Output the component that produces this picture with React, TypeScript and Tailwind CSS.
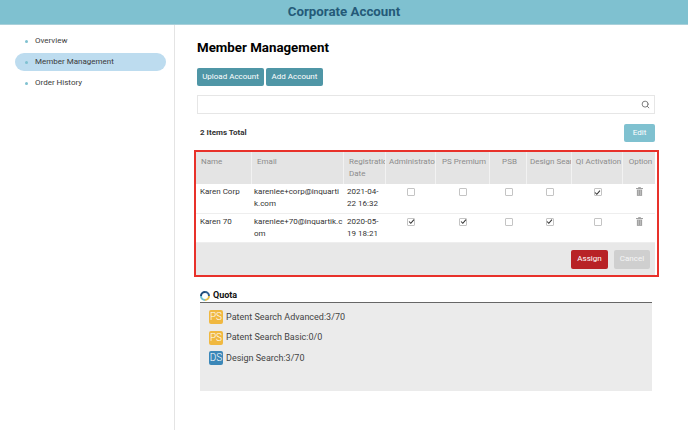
import { Search } from "lucide-react";

const navItems = ["Overview", "Member Management", "Order History"];
const columns = "grid-cols-[56px_92px_42px_50px_54px_37px_45px_51px_32px]";
const headers = ["Name", "Email", "Registration Date", "Administrator", "PS Premium", "PSB", "Design Search", "QI Activation", "Option"];

const members = [
  { name: "Karen Corp", email: "karenlee+corp@inquartik.com", date: "2021-04-22 16:32", checks: [false, false, false, false, true] },
  { name: "Karen 70", email: "karenlee+70@inquartik.com", date: "2020-05-19 18:21", checks: [true, true, false, true, false] },
];

const quotas = [
  { label: "PS", color: "bg-[#f0b840]", text: "Patent Search Advanced:3/70" },
  { label: "PS", color: "bg-[#f0b840]", text: "Patent Search Basic:0/0" },
  { label: "DS", color: "bg-[#3b87b8]", text: "Design Search:3/70" },
];

function Checkbox({ checked }: { checked: boolean }) {
  return (
    <span className="flex h-[8px] w-[8px] items-center justify-center rounded-[1px] border border-[#c4c4c4] bg-white">
      {checked && (
        <svg viewBox="0 0 8 8" className="h-[7px] w-[7px] shrink-0" fill="none" stroke="#333" strokeWidth="1.2">
          <path d="M1.2 4 L3.2 6 L6.8 1.8" />
        </svg>
      )}
    </span>
  );
}

function TrashIcon() {
  return (
    <svg viewBox="0 0 8 10" className="h-[9px] w-[7px]" fill="#a0a0a0">
      <rect x="2.5" y="0" width="3" height="1" />
      <rect x="0" y="1" width="8" height="1.2" />
      <path d="M1 2.8 H7 V10 H1 Z" />
      <path d="M2.8 3.5 V9 M5.2 3.5 V9" stroke="#d8d8d8" strokeWidth="0.6" />
    </svg>
  );
}

function QuotaRing() {
  return (
    <svg viewBox="0 0 10 10" className="h-[10px] w-[10px]" fill="none" strokeWidth="2">
      <path d="M5 1 A4 4 0 0 1 9 5" stroke="#2f5f8f" />
      <path d="M9 5 A4 4 0 0 1 5 9" stroke="#e6c04a" />
      <path d="M5 9 A4 4 0 0 1 1 5" stroke="#6fc0cf" />
      <path d="M1 5 A4 4 0 0 1 5 1" stroke="#1f4a78" />
    </svg>
  );
}

export default function App() {
  return (
    <div className="flex h-[430px] w-[688px] flex-col overflow-hidden bg-white font-['Roboto',sans-serif] text-[#333]">
      {/* Header */}
      <div className="flex h-[25px] shrink-0 items-center justify-center border-b border-[#a9d0da] bg-[#7fc1d0] text-[13.3px] font-bold text-[#245a78]">
        Corporate Account
      </div>

      <div className="flex flex-1">
        {/* Sidebar */}
        <div className="w-[175px] shrink-0 border-r border-[#e4e4e4] pl-[15px] pt-[7px]">
          {navItems.map((item) => (
            <div
              key={item}
              className={`mb-[3px] flex h-[18px] w-[151px] items-center gap-[7px] rounded-full pl-[10px] text-[8px] text-[#3a3a3a] ${
                item === "Member Management" ? "bg-[#bddcef]" : ""
              }`}
            >
              <span className="h-[3px] w-[3px] rounded-full bg-[#7fc1d0]" />
              {item}
            </div>
          ))}
        </div>

        {/* Main */}
        <div className="flex-1 pl-[22px] pt-[13px]">
          <h1 className="text-[13.3px] leading-[20px] font-bold text-black">Member Management</h1>

          <div className="mt-[10px] flex gap-[2px]">
            <button className="h-[18px] w-[67px] rounded-[2px] bg-[#4f96a6] text-[8px] text-white">Upload Account</button>
            <button className="h-[18px] w-[57px] rounded-[2px] bg-[#4f96a6] text-[8px] text-white">Add Account</button>
          </div>

          <div className="mt-[9px] flex h-[19px] w-[458px] items-center justify-end border border-[#e6e6e6] pr-[4px]">
            <Search className="h-[9px] w-[9px] text-[#777]" strokeWidth={2.5} />
          </div>

          <div className="mt-[10px] flex h-[18px] w-[458px] items-center justify-between pl-[3px]">
            <span className="text-[8px] font-bold text-[#333]">2 Items Total</span>
            <button className="h-[18px] w-[31px] rounded-[2px] bg-[#7fc1d0] text-[8px] text-white">Edit</button>
          </div>

          {/* Member table */}
          <div className="ml-[-3px] mt-[8px] h-[127px] w-[465px] border-2 border-[#e8312a]">
            <div className="w-[459px]">
              <div className={`grid h-[32px] ${columns} bg-[#e4e4e4] text-[8px] leading-[11.5px] text-[#8c8c8c]`}>
                {headers.map((header, i) => (
                  <div
                    key={header}
                    className={`overflow-hidden border-r border-[#f2f2f2] pt-[4px] last:border-r-0 ${
                      i < 3 ? "pl-[5px]" : "whitespace-nowrap pl-[3px] text-center"
                    }`}
                  >
                    {header}
                  </div>
                ))}
              </div>

              {members.map((member) => (
                <div key={member.name} className={`grid h-[29.5px] ${columns} border-b border-[#eeeeee] text-[8px] leading-[12px] text-[#333]`}>
                  <div className="pl-[4px] pt-[2px]">{member.name}</div>
                  <div className="pl-[2px] pr-[1.5px] pt-[2px] break-all">{member.email}</div>
                  <div className="pl-[3px] pt-[2px]">{member.date}</div>
                  {member.checks.map((checked, i) => (
                    <div key={i} className="flex justify-center pt-[4px]">
                      <Checkbox checked={checked} />
                    </div>
                  ))}
                  <div className="flex justify-center pt-[3px]">
                    <TrashIcon />
                  </div>
                </div>
              ))}

              <div className="flex h-[32px] items-center justify-end gap-[6px] bg-[#e8e8e8] pr-[5px]">
                <button className="h-[19px] w-[37px] rounded-[2px] bg-[#b82226] text-[8px] text-white">Assign</button>
                <button className="h-[19px] w-[36px] rounded-[2px] bg-[#cfcfcf] text-[8px] text-[#f5f5f5]">Cancel</button>
              </div>
            </div>
          </div>

          {/* Quota */}
          <div className="ml-[3px] mt-[13px] w-[452px]">
            <div className="flex h-[12px] items-center gap-[3px] text-[9px] font-bold text-[#111]">
              <QuotaRing />
              Quota
            </div>
            <div className="h-[89px] border-t border-[#666] bg-[#ebebeb] pl-[9px] pt-[7px]">
              {quotas.map((quota) => (
                <div key={quota.text} className="mb-[6px] flex h-[14.5px] items-center gap-[3px] text-[9px] text-[#444]">
                  <span className={`flex h-[14px] w-[14px] items-center justify-center rounded-[2px] text-[10px] font-light leading-none text-white ${quota.color}`}>
                    {quota.label}
                  </span>
                  {quota.text}
                </div>
              ))}
            </div>
          </div>
        </div>
      </div>
    </div>
  );
}
